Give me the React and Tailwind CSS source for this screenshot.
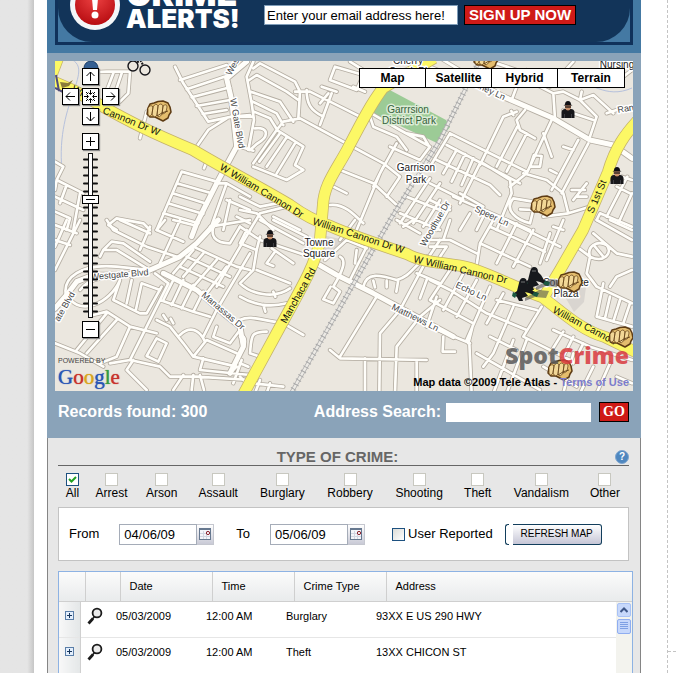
import React, { useState } from 'react';

// Side streets, grouped in map tiles. Paths use three units per map pixel.
const tiles = [
  {
    at: 'translate(50 50) scale(0.3333)',
    streets: [
      'M375 50 L400 100 L475 215 L545 200 L600 195',
      'M390 90 L530 45 M410 118 L530 78 M425 142 L540 112 M440 168 L540 150 M458 192 L530 180',
      'M440 290 L475 240 L530 205',
      'M320 540 L395 365 L500 395 M380 400 L485 430 M368 430 L472 462 M354 460 L460 492 M340 490 L445 520',
      'M500 400 L530 400 L480 540 M530 400 L600 440 M530 450 L600 480 M540 450 L520 540 M560 500 L600 520',
      'M290 185 L270 265 M470 335 L462 355',
      'M170 65 L240 65 L235 130 L210 155 M190 70 L165 135 M215 70 L190 145 M110 68 L170 65',
      'M15 335 L40 350 L20 390 L100 430 M20 390 L15 420 M15 440 L100 480 M50 405 L30 460 M15 485 L60 505 L50 540 M90 430 L70 540',
      'M175 525 L200 505 L280 520 L300 540',
      'M175 525 L200 540',
    ],
    avenues: ['M590 35 L530 85 L545 150 L560 290 L500 400 L440 520 L425 560'],
  },
  {
    at: 'translate(50 220) scale(0.3333)',
    streets: [
      'M15 15 L80 40 M15 60 L60 75 M90 0 L15 150 M50 0 L15 80',
      'M170 0 L190 30 L290 80 L380 110 M210 0 L300 40 M270 90 L300 20 M320 30 L400 65 M345 0 L320 30 M390 0 L330 130 M370 0 L430 15',
      'M150 110 L160 90 L185 65 L220 70 L300 125 M160 90 L200 90 L290 145',
      'M50 235 C30 170 100 130 200 140 L300 150 M55 230 C90 290 180 250 210 180 M90 210 C120 170 180 170 210 170',
      'M210 180 L190 240 L270 280 L290 280 L335 200 M230 250 L245 180 M258 268 L275 190 L330 210',
      'M315 160 L355 190 L280 340 L240 420',
      'M340 240 L370 180 M365 255 L400 180 M395 265 L430 195 M330 240 L430 275 L480 290 M430 275 L460 215',
      'M430 80 L560 140 L600 150 M410 110 L540 170 M390 140 L520 200 M430 90 L370 160 M460 100 L400 170 M500 120 L430 200 M530 140 L470 220',
      'M500 0 C470 50 500 70 540 70 L570 20 M480 20 L600 0 M600 30 L500 200 M600 100 L500 270 L460 350',
      'M130 285 L170 275 L240 320 L320 340 M170 280 L80 390 M200 300 L110 400 M240 320 L200 410 L150 430 M280 340 L240 420 L180 430',
      'M320 300 L360 320 L400 370 L430 410 L560 440 L540 460 M430 410 L470 360 L560 400 M390 345 C420 315 450 330 465 365 M500 320 L490 350 L540 370 L570 330',
      'M15 370 L90 400 L160 440 M240 420 L330 440 L360 470 L440 470 L600 480',
      'M320 355 L350 370 L325 425 L290 408 Z M250 420 L230 450 L290 510 M370 510 L400 465 M425 510 L430 465 M450 465 L462 510',
      'M460 415 L450 450 L600 465 M575 420 L550 490',
      'M350 300 l-10 -15 M370 310 l-8 -14',
    ],
    avenues: ['M505 0 L440 70 L390 110 L300 150 L230 165 L130 165 L80 185 L50 225 L15 265', 'M340 160 L440 210 L520 280 L570 320 L580 380 L540 460'],
  },
  {
    at: 'translate(240 50) scale(0.3333)',
    streets: [
      'M40 35 L20 80 L35 160 L42 210 L25 300 M0 200 L40 200',
      'M40 55 L60 40 L165 95 L180 125 L175 205 M28 90 L50 75 L140 125 L175 150 M32 125 L120 155 L160 215 M38 155 L110 190 L130 225 M42 185 L90 205 L112 240',
      'M165 125 L210 125 L300 170 L380 210',
      'M40 340 L110 240 L130 215 L180 205 L300 270 L430 340 L480 380 L440 440',
      'M110 240 L190 290 L165 345 L190 360 L140 390 L40 350 M165 280 L110 370 M140 262 L80 350 M120 250 L58 335',
      'M45 235 C85 230 90 260 50 282 L30 300 M0 290 L40 302',
      'M200 120 C200 160 210 180 250 200 M275 130 L240 225 M245 110 L290 125 M265 130 L240 160',
      'M270 90 L285 50 L370 75 L350 120 Z M330 35 L370 60 M375 125 L340 110',
      'M385 185 L480 240 L570 290 L540 330 L450 290 M390 200 L400 230 L470 260 L500 300 M500 250 L550 260 L565 285 M470 280 L420 370 L350 540',
      'M300 360 L400 400 L470 465 M430 350 L400 410 M280 410 L320 430 M270 465 C310 460 340 490 370 520',
      'M500 440 L600 480 M480 520 L570 385 M520 520 L600 400 M550 530 L600 450 M480 490 L600 540',
      'M0 440 L60 470 L110 460 M0 480 L50 490 L100 540 M30 540 L60 490 L140 470 M100 500 L180 540',
    ],
    avenues: [],
  },
  {
    at: 'translate(240 220) scale(0.3333)',
    streets: [
      'M0 20 L60 60 L210 110 M60 0 L190 70 M100 0 L200 50 M0 70 L50 90 L40 150 L0 190 M95 85 L160 130 M105 95 L80 130 l20 8 M50 150 L150 190',
      'M60 50 L50 90 M20 30 L0 70 M0 190 C30 220 100 240 150 205 M0 230 C50 260 100 260 140 250 M70 255 l6 20 M100 215 l6 15',
      'M0 300 C30 285 60 300 130 310 L190 345 M80 335 C30 335 35 350 30 400 L60 410 M0 350 C20 340 20 380 0 400',
      'M255 120 L320 60 L380 85 M300 110 C320 120 310 150 280 200 L300 215 L280 250 L250 238 L272 200 M345 0 L300 60 M330 180 L390 60 M350 90 L345 130',
      'M370 200 C380 155 420 165 470 180 C510 170 520 140 560 110 M400 182 l5 20 M440 182 l0 20 M475 180 l-6 35',
      'M410 230 L300 410 M270 390 L300 415 L560 420 M375 415 L375 520 M418 520 L420 340 L480 270 L560 120 L600 60 M465 520 L470 380 L540 290 L600 240 M530 520 L530 420',
      'M470 0 L540 40 M520 0 L490 20 M530 160 L600 190 M560 180 L540 235 M590 230 L560 320',
      'M40 490 L130 500 M60 480 L45 520 M90 490 L80 520 M0 470 L30 500 M0 430 L25 440',
    ],
    avenues: ['M230 130 L290 165 L400 220 L520 285 L640 350'],
  },
  {
    at: 'translate(430 50) scale(0.3333)',
    streets: [
      'M0 50 L60 75 M40 30 L90 60 M200 40 L260 60 M245 150 L260 110 L290 60',
      'M290 75 L330 110 L370 130 L375 205 M360 110 L430 35 M370 130 L400 125 L450 150 L500 200 L480 260 M400 180 L490 210 M450 150 L490 135 L550 190 M450 150 L455 125',
      'M285 180 L260 210 L270 240 L315 265 M365 210 L290 370 L240 410 M260 185 L220 200 L150 345 M262 230 L200 350 M290 250 L230 365 M250 195 l-6 -12',
      'M60 250 L290 365 M50 285 L270 400 M60 250 L0 350 M80 300 L40 370 M105 312 L65 395 M130 325 L95 405 M150 340 L90 460 M20 330 L180 405 L210 435',
      'M340 250 L365 320 M300 350 L312 315 L335 318 L330 350 Z',
      'M445 270 L365 420 M475 280 L395 430 M400 290 L430 300 M360 360 L380 370',
      'M280 370 L350 390 L400 430 L415 490 L340 500 M415 490 L480 470 M470 400 L430 450 M440 440 L470 440 M425 420 L465 420',
      'M160 340 L240 390 L245 430 L200 540 M90 430 L160 470 M70 440 L300 540',
      'M340 460 L250 445 C220 480 260 510 300 520 L310 480 L270 478',
      'M592 380 L530 500 M606 430 L565 520 M575 380 L606 390 M500 510 L510 490 L606 530 M560 410 L600 430',
      'M580 80 L606 60 M530 190 L560 180 M0 400 L100 450 M0 450 L60 480 M60 470 L20 540 M120 490 L90 540 M160 500 L140 540',
    ],
    avenues: ['M90 70 L220 140 L370 205 L480 270 L550 285 L606 325'],
  },
  {
    at: 'translate(430 220) scale(0.3333)',
    streets: [
      'M0 60 L60 60 L140 100 M0 80 L50 80 L30 110 M60 0 L40 60 M140 135 L150 70 L190 0 M150 70 L300 140 M180 20 L345 95 M230 0 L390 80 M260 10 L200 130 M310 30 L250 140 M360 40 L330 130 M400 0 L350 120 M400 30 L370 20',
      'M0 180 L60 210 L170 280 M0 240 L130 310 L115 370 M60 150 L0 240 M100 160 L40 270 M140 180 L80 290 M180 200 L110 360 M220 220 L170 310 M0 320 L120 370 M40 350 L38 395 L75 395 M118 370 L125 520',
      'M335 260 L280 350 L420 420 M170 280 L290 330 M200 240 L320 270 M250 260 L190 400 L160 440 M180 350 L260 390 M140 400 L330 510 M250 360 L190 520 M290 360 L230 520',
      'M370 330 L480 380 L606 420 M400 335 L360 400 M430 350 L390 430 M460 370 L430 430',
      'M500 0 L606 60 M490 40 L560 100 L606 110 M440 80 L480 110 L470 160 L500 200 L606 250 M540 0 L606 30 M520 190 L500 290 L606 320 M540 230 L525 295 M570 240 L550 305 M600 250 L580 310 M606 150 L560 170 L540 200',
      'M480 110 C470 80 500 60 530 75 C550 100 520 130 480 110 M495 80 L520 110',
      'M430 400 L400 520 M490 440 L450 520 M540 430 L500 520 M340 440 L440 500 M560 470 L606 490',
    ],
    avenues: [],
  },
];

const mainRoads = [
  'M50 80 L75 91 L100 105 C130 122 150 132 193 150 C230 172 262 188 290 205 C305 216 318 222 330 226 C350 235 380 245 407 254 C425 264 450 262 470 268 C500 278 520 290 542 297 C560 310 580 330 605 337 L640 354',
  'M434 58 L383 88 C370 105 360 125 347 150 C335 172 324 185 323 205 L320 240 C316 262 306 280 280 327 L243 395',
  'M640 118 C625 134 615 148 608 172 L583 230 L560 270 L545 295',
  'M58 58 L52 74',
];

const roadLabels = [
  { x: 71, y: 91, r: 28, t: 'Wil' },
  { x: 102, y: 113, r: 22, t: 'Cannon Dr W' },
  { x: 219, y: 169, r: 31, t: 'W William Cannon Dr' },
  { x: 312, y: 224, r: 18, t: 'William Cannon Dr W' },
  { x: 413, y: 262, r: 13, t: 'W William Cannon Dr' },
  { x: 552, y: 312, r: 28, t: 'William Cannon' },
  { x: 286, y: 324, r: -61, t: 'Manchaca Rd' },
  { x: 593, y: 214, r: -67, t: 'S 1st St' },
];

const streetLabels = [
  { x: 231, y: 76, r: -62, t: 'Wes' },
  { x: 230, y: 99, r: 80, t: 'W Gate Blvd' },
  { x: 91, y: 280, r: -5, t: 'Westgate Blvd' },
  { x: 59, y: 322, r: -60, t: 'ate Blvd' },
  { x: 201, y: 296, r: 40, t: 'Manassas Dr' },
  { x: 391, y: 309, r: 26, t: 'Matthews Ln' },
  { x: 425, y: 247, r: -60, t: 'Woodhue Dr' },
  { x: 474, y: 211, r: 25, t: 'Speer Ln' },
  { x: 455, y: 287, r: 25, t: 'Echo Ln' },
  { x: 475, y: 87, r: 25, t: 'finey Ln' },
  { x: 618, y: 113, r: -10, t: 'Ran' },
];

const placeLabels = [
  { x: 416, y: 171, t: 'Garrison' },
  { x: 416, y: 183, t: 'Park' },
  { x: 319, y: 246, t: 'Towne' },
  { x: 319, y: 257, t: 'Square' },
  { x: 566, y: 286, t: 'Southgate' },
  { x: 566, y: 297, t: 'Plaza' },
  { x: 408, y: 64, t: 'Cherry' },
  { x: 408, y: 75, t: 'Creek Pl' },
  { x: 617, y: 68, t: 'Nursing' },
];

const crimeTypes = ['All', 'Arrest', 'Arson', 'Assault', 'Burglary', 'Robbery', 'Shooting', 'Theft', 'Vandalism', 'Other'];

const records = [
  { date: '05/03/2009', time: '12:00 AM', type: 'Burglary', address: '93XX E US 290 HWY' },
  { date: '05/03/2009', time: '12:00 AM', type: 'Theft', address: '13XX CHICON ST' },
];

const Fist = ({ x, y }) => (
  <g transform={`translate(${x} ${y})`} stroke="#5e3c14" strokeWidth="0.9" strokeLinejoin="round">
    <path d="M-11 -3 L-9 -7 L-5 -8 L-1 -9.5 L4 -10 L9 -8 L11 -4 L12 1 L10 4 L9 7 L4 10 L0 8 L-4 6 L-9 6 L-12 3 Z" fill="#e4bd6e" strokeWidth="1.5" />
    <path d="M-11 -3 Q-8 -7 -6 -4 L-7 3 Q-10 7 -11 3 Z M-6 -4 Q-3 -9 -1 -5 L-2 4 Q-5 8 -7 3 Z M-1 -5 Q2 -9 4 -5 L3 3 Q0 8 -2 4 Z M4 -5 Q8 -8 8 -4 L7 1 Q5 3 3 3 Z" fill="#f2d796" strokeWidth="0.7" />
    <path d="M-2 5 Q3 1 9 0" fill="none" />
  </g>
);

const Burglar = ({ x, y }) => (
  <g transform={`translate(${x} ${y})`}>
    <path d="M-6.5 8 V2 Q-6 -1 -3 -1 H3 Q6 -1 6.5 2 V8 Z" fill="#17171a" />
    <path d="M-3 -5 H3 V-2 Q2 0.5 0 0.5 Q-2 0.5 -3 -2 Z" fill="#c98f6a" />
    <path d="M-4.5 -4.5 L-3 -5.5 Q-3 -9 0 -9 Q3 -9 3 -5.5 L4.5 -4.5 Z" fill="#101014" />
    <path d="M-3 -3 H3" stroke="#101014" strokeWidth="1.2" />
    <path d="M-3.5 4 V8 M3.5 4 V8" stroke="#4d4d55" strokeWidth="0.7" />
  </g>
);

const Robber = ({ x, y }) => (
  <g transform={`translate(${x} ${y})`}>
    <path d="M0 9 L14 1 L24 2 L21 9 L10 8 L0 12 Z" fill="#555" opacity="0.6" />
    <path d="M-6 -6 Q-5 -11 -2 -11 Q2 -11 2 -6 L5 -3 L8 2 L13 4 L11 7 L4 4 L0 3 L3 7 L-3 9 L-2 12 L-6 12 L-8 8 L-12 5 L-8 2 Z" fill="#17191d" />
    <path d="M9 3 l5 1 l-2 4 l-5 -2 Z M-12 3 l4 2 l-2 4 l-3 -2 Z" fill="#1c5a42" />
    <path d="M-4 -7 H0" stroke="#8a8a8a" strokeWidth="0.8" />
  </g>
);

const CrimeMap = () => (
  <svg className="block w-full h-[330px] bg-[#e9e5dc] font-['Liberation_Sans',Arial,sans-serif]" viewBox="55 61 578 330" preserveAspectRatio="xMidYMid slice" role="img" aria-label="Crime map">
    <rect x="-400" y="0" width="1600" height="500" fill="#ebe7df" />
    <path d="M386 88 L446 120 L450 127 L437 143 L370 112 Z" fill="#9ccb96" />
    <path d="M562 292 L586 287 L584 302 L574 312 Z M322 235 L345 240 L325 257 Z" fill="#d9d5d0" />
    <path d="M573 82 C590 80 605 100 632 88 M68 58 C98 68 55 100 62 170" fill="none" stroke="#b6c1dc" />

    <g fill="none" strokeLinecap="round" strokeLinejoin="round">
      {tiles.map((tile) => (
        <g key={tile.at} transform={tile.at} stroke="#b4ada2">
          <path d={tile.streets.join(' ')} strokeWidth="13" />
          <path d={tile.avenues.join(' ')} strokeWidth="20" />
        </g>
      ))}
      {tiles.map((tile) => (
        <g key={tile.at} transform={tile.at} stroke="#fffefa">
          <path d={tile.streets.join(' ')} strokeWidth="8" />
          <path d={tile.avenues.join(' ')} strokeWidth="15" />
        </g>
      ))}
    </g>

    {/* railway */}
    <g fill="none">
      <path d="M481 58 L440 140 L390 220 L290 395" stroke="#b2b2b2" strokeWidth="4" />
      <path d="M481 58 L440 140 L390 220 L290 395" stroke="#eceae5" strokeWidth="2.4" />
      <path d="M481 58 L440 140 L390 220 L290 395" stroke="#a8a8a8" strokeWidth="6" strokeDasharray="1 4" />
    </g>

    <g fill="none" strokeLinejoin="round">
      <path d={mainRoads.join(' ')} stroke="#c4b26a" strokeWidth="12" />
      <path d={mainRoads.join(' ')} stroke="#fcf865" strokeWidth="10.5" />
    </g>
    <path d="M56 75 L59 91 M55 88 L63 92" fill="none" stroke="#514d7a" strokeWidth="2" />
    <path d="M60 82 L68 83 L73 80 L69 86 L62 88 Z" fill="#8a7c3a" />

    <g fontSize="10" fill="#111">
      {roadLabels.map((l) => (
        <text key={l.x} transform={`translate(${l.x} ${l.y}) rotate(${l.r})`}>{l.t}</text>
      ))}
    </g>
    <g fontSize="9" fill="#444" stroke="#fff" strokeWidth="3" paintOrder="stroke" strokeLinejoin="round">
      {streetLabels.map((l) => (
        <text key={l.t} transform={`translate(${l.x} ${l.y}) rotate(${l.r})`}>{l.t}</text>
      ))}
    </g>
    <g fontSize="10" fill="#222" stroke="#fff" strokeWidth="3" paintOrder="stroke" strokeLinejoin="round" textAnchor="middle">
      {placeLabels.map((l) => (
        <text key={l.t} x={l.x} y={l.y}>{l.t}</text>
      ))}
      <g fill="#35613a" stroke="#dcecd6">
        <text x="408" y="113">Garrrsion</text>
        <text x="409" y="124">District Park</text>
      </g>
    </g>

    {/* handcuffs */}
    <g fill="none" stroke="#15151a" strokeWidth="1.4">
      <circle cx="133" cy="66" r="5" />
      <circle cx="145" cy="70" r="5" />
      <path d="M137 62 L141 61 L143 65" strokeWidth="2" strokeDasharray="2 1" />
    </g>
    <circle cx="91" cy="68" r="7" fill="#345f92" stroke="#1c3d66" />

    <Burglar x={270} y={239} />
    <Burglar x={568} y={110} />
    <Burglar x={617} y={176} />
    <Robber x={536} y={278} />
    <Robber x={525} y={289} />
    <Fist x={159} y={111} />
    <Fist x={486} y={59} />
    <Fist x={543} y={206} />
    <Fist x={570} y={282} />
    <Fist x={621} y={337} />
    <Fist x={560} y={370} />
  </svg>
);

const mapButton = 'flex items-center justify-center w-[17px] h-[17px] bg-white border border-black shadow-[1px_1px_1px_#888]';

const Glyph = ({ d }) => (
  <svg className="w-[15px] h-[15px] shrink-0" viewBox="0 0 15 15" fill="none" stroke="#000" aria-hidden="true">
    <path d={d} />
  </svg>
);

const MapControls = () => (
  <div className="absolute left-[7px] top-[7px] w-[57px] flex flex-col items-center">
    <div className="grid grid-cols-3 gap-[3px]">
      <button className={`${mapButton} col-start-2`} aria-label="Pan up"><Glyph d="M7.5 12 V3 M3.5 7 L7.5 3 L11.5 7" /></button>
      <button className={`${mapButton} col-start-1`} aria-label="Pan left"><Glyph d="M12 7.5 H3 M7 3.5 L3 7.5 L7 11.5" /></button>
      <button className={mapButton} aria-label="Recenter"><Glyph d="M7.5 1 V5 M5.5 3.5 L7.5 5.5 L9.5 3.5 M7.5 14 V10 M5.5 11.5 L7.5 9.5 L9.5 11.5 M1 7.5 H5 M3.5 5.5 L5.5 7.5 L3.5 9.5 M14 7.5 H10 M11.5 5.5 L9.5 7.5 L11.5 9.5 M3 3 L5 5 M12 3 L10 5 M3 12 L5 10 M12 12 L10 10" /></button>
      <button className={mapButton} aria-label="Pan right"><Glyph d="M3 7.5 H12 M8 3.5 L12 7.5 L8 11.5" /></button>
      <button className={`${mapButton} col-start-2`} aria-label="Pan down"><Glyph d="M7.5 3 V12 M3.5 8 L7.5 12 L11.5 8" /></button>
    </div>
    <button className={`${mapButton} mt-2`} aria-label="Zoom in"><Glyph d="M3 7.5 H12 M7.5 3 V12" /></button>
    <div className="relative w-[17px] h-[171px]">
      <svg className="block w-[17px] h-[171px]" viewBox="0 0 17 171" aria-hidden="true">
        {Array.from({ length: 20 }, (_, i) => (
          <path key={i} d={`M2 ${9.5 + i * 8} h13`} stroke="#111" strokeWidth="2" strokeLinecap="round" />
        ))}
        <rect x="6.5" y="3.5" width="4" height="164" fill="#fff" stroke="#111" />
        <rect x="0.5" y="45.5" width="16" height="8" fill="#fff" stroke="#000" />
        <path d="M4 49.5 h9" stroke="#000" />
      </svg>
      <input type="range" min="0" max="19" defaultValue="14" aria-label="Zoom level" className="absolute inset-0 w-full h-full opacity-0" />
    </div>
    <button className={mapButton} aria-label="Zoom out"><Glyph d="M3 7.5 H12" /></button>
  </div>
);

const DateField = ({ id, label, value }) => (
  <div className="flex items-center">
    <label htmlFor={id} className="text-[13px]">{label}</label>
    <input id={id} type="text" defaultValue={value} className="ml-5 w-[78px] h-[21px] px-1 text-[13px] bg-white border border-[#a5acb8] outline-none" />
    <button type="button" aria-label={`Pick ${label} date`} className="flex items-center justify-center w-[17px] h-[21px] border-y border-r border-[#c5c7cf] bg-linear-to-b from-white to-[#c9cad6]">
      <svg className="w-[13px] h-[13px]" viewBox="0 0 13 13" aria-hidden="true">
        <rect x="0.5" y="0.5" width="11" height="11" fill="#f4f5fa" stroke="#66788f" />
        <path d="M1 1.5 H11" stroke="#66788f" />
        <path d="M4.5 3 V11 M7.5 3 V11 M1 5.5 H11 M1 8.5 H11" stroke="#d2d6e2" />
        <circle cx="9" cy="5" r="1.6" fill="#fff" stroke="#8a1f2b" />
      </svg>
    </button>
  </div>
);

const App = () => {
  const [selected, setSelected] = useState(['All']);

  const toggle = (type) => {
    setSelected(selected.includes(type) ? selected.filter((s) => s !== type) : [...selected, type]);
  };

  return (
    <div className="flex h-screen overflow-hidden bg-white font-['Liberation_Sans',Arial,sans-serif] text-black">
      <div className="w-[34px] shrink-0 bg-linear-to-r from-[#e5e5e5] from-80% to-[#c6c6c6]" />
      <div className="w-[13px] shrink-0" />

      <main className="flex-1 min-w-0 flex flex-col">
        <header className="bg-[#4479a3] px-2 pb-2">
          <div className="border-x-[3px] border-b-[3px] border-[#10315a]">
            <div className="flex items-start h-[42px] overflow-hidden rounded-b-[34px] bg-[#123459]">
              <svg className="ml-3 w-[50px] h-[32px] shrink-0" viewBox="0 18 50 32" aria-hidden="true">
                <defs>
                  <radialGradient id="alert" cx="50%" cy="30%" r="70%">
                    <stop offset="0" stopColor="#ef4444" />
                    <stop offset="1" stopColor="#b80d12" />
                  </radialGradient>
                </defs>
                <circle cx="25" cy="23" r="25" fill="#f4f6f8" />
                <circle cx="25" cy="23" r="20" fill="url(#alert)" />
                <path d="M21 5 H29 L27 28 H23 Z" fill="#fff" />
                <circle cx="25" cy="33" r="3.5" fill="#fff" />
              </svg>
              <div className="ml-[6px] w-[116px] h-[42px] shrink-0 flex flex-col justify-end pb-3 font-[Inter,sans-serif] font-black text-white">
                <span className="text-[34px] leading-7">CRIME</span>
                <span className="text-[26px] leading-[22px]">ALERTS!</span>
              </div>
              <form className="ml-[22px] mt-[5px] flex gap-[6px]" onSubmit={(e) => e.preventDefault()}>
                <input type="text" aria-label="Email address" defaultValue="Enter your email address here!" className="w-[194px] h-5 px-[2px] bg-white border border-[#7f9db9] text-[13px] outline-none" />
                <button type="submit" className="w-[112px] h-5 bg-[#cf1a17] border border-black text-[15px] leading-4 font-bold text-white whitespace-nowrap">SIGN UP NOW</button>
              </form>
            </div>
          </div>
        </header>

        <section className="bg-[#8aa3b9] px-2 pt-2 pb-4 shrink-0">
          <div className="relative overflow-hidden">
            <CrimeMap />
            <MapControls />
            <div className="absolute right-2 top-[7px] flex border border-black">
              {['Map', 'Satellite', 'Hybrid', 'Terrain'].map((view) => (
                <button key={view} className="w-[66px] h-[18px] bg-white border-r border-black last:border-r-0 text-[12px] leading-4 font-bold">{view}</button>
              ))}
            </div>
            <div className="absolute left-[3px] bottom-[2px] flex flex-col">
              <span className="text-[7px] leading-2 text-[#444]">POWERED BY</span>
              <span className="font-['Liberation_Serif',serif] text-[21px] leading-6 [text-shadow:0_0_1px_currentColor]">
                <span className="text-[#2a56b5]">G</span>
                <span className="text-[#c8322d]">o</span>
                <span className="text-[#d9a520]">o</span>
                <span className="text-[#2a56b5]">g</span>
                <span className="text-[#3a9a3f]">l</span>
                <span className="text-[#c8322d]">e</span>
              </span>
            </div>
            <div className="absolute right-1 bottom-[2px] flex flex-col items-end whitespace-nowrap">
              <span className="mb-1 font-['Open_Sans',sans-serif] text-[23px] leading-8 font-extrabold opacity-85">
                <span className="text-[#5a5a5a]">Spot</span>
                <span className="text-[#d93a3f]">Crime</span>
              </span>
              <span className="text-[11px] leading-[14px] font-bold">
                Map data ©2009 Tele Atlas - <a href="#terms" className="text-[#7b7bcc]">Terms of Use</a>
              </span>
            </div>
          </div>

          <div className="mt-[11px] flex items-center justify-between pl-[3px] pr-1 text-white">
            <span className="text-[16px] leading-5 font-bold">Records found: 300</span>
            <form className="flex items-center" onSubmit={(e) => e.preventDefault()}>
              <label htmlFor="address" className="text-[16px] leading-5 font-bold">Address Search:</label>
              <input id="address" type="text" className="ml-[5px] w-[145px] h-[19px] bg-white text-[13px] text-black outline-none" />
              <button type="submit" className="ml-2 w-[30px] h-5 bg-[#cf1a17] border border-black font-['Liberation_Serif',serif] text-[14px] leading-4 font-bold text-white">GO</button>
            </form>
          </div>
        </section>

        <section className="flex-1 flex flex-col border-x border-[#858585] bg-[#e7e7e7] pl-[10px] pr-[7px]">
          <div className="relative mr-1 mt-[10px] pr-3 border-b border-[#666] text-center">
            <h2 className="text-[15px] leading-[17px] font-bold text-[#666]">TYPE OF CRIME:</h2>
            <button type="button" aria-label="Help" className="absolute right-0 top-[2px] w-[14px] h-[14px] rounded-full border border-[#7fa6d0] bg-[#4f87bf] text-[10px] leading-3 font-bold text-white">?</button>
          </div>

          <div className="mt-[7px] mr-1 grid grid-cols-[29fr_49fr_51fr_62fr_66fr_69fr_69fr_48fr_79fr_48fr]">
            {crimeTypes.map((type) => (
              <label key={type} className="flex flex-col items-center text-[12px] leading-[14px]">
                <span className="relative w-[13px] h-[13px]">
                  <input
                    type="checkbox"
                    checked={selected.includes(type)}
                    onChange={() => toggle(type)}
                    className="block appearance-none w-[13px] h-[13px] bg-white border border-[#c8c8c0] checked:border-[#1d5180]"
                  />
                  {selected.includes(type) && (
                    <svg className="absolute inset-0 pointer-events-none" viewBox="0 0 13 13" fill="none" stroke="#21a121" strokeWidth="2" aria-hidden="true">
                      <path d="M3 6 L5.5 8.5 L10 4" />
                    </svg>
                  )}
                </span>
                {type}
              </label>
            ))}
          </div>

          <form className="mt-[7px] mr-1 h-[54px] shrink-0 flex items-center border border-[#c3c3c3] bg-white pl-[10px]" onSubmit={(e) => e.preventDefault()}>
            <DateField id="from" label="From" value="04/06/09" />
            <div className="ml-[22px]">
              <DateField id="to" label="To" value="05/06/09" />
            </div>
            <label className="ml-[27px] flex items-center gap-[3px] text-[13px] whitespace-nowrap">
              <input type="checkbox" className="appearance-none w-[13px] h-[13px] border border-[#1d5180] bg-linear-to-br from-[#dcdcd7] to-white" />
              User Reported
            </label>
            <span className="ml-3 w-1 h-[21px] rounded-l-[3px] border-l border-y border-[#123e5c]" />
            <button type="submit" className="ml-1 w-[89px] h-[21px] rounded-r-[3px] border-y border-r border-[#123e5c] bg-linear-to-b from-white to-[#c6c6d6] text-[10px] leading-4 whitespace-nowrap">REFRESH MAP</button>
          </form>

          <div className="mt-[10px] flex-1 border-x border-t border-[#8db2e3] bg-white text-[11px]">
            <table className="w-full table-fixed border-collapse bg-linear-to-b from-[#fbfbfb] to-[#e9ebec]" aria-label="Record columns">
              <thead>
                <tr className="h-[29px] border-b border-[#cfcfcf]">
                  <th className="w-[26px] border-r border-[#cfcfcf]" aria-label="Expand" />
                  <th className="w-[35px] border-r border-[#cfcfcf]" aria-label="Locate" />
                  <th className="w-[92px] border-r border-[#cfcfcf] pl-[9px] text-left font-normal">Date</th>
                  <th className="w-[82px] border-r border-[#cfcfcf] pl-[9px] text-left font-normal">Time</th>
                  <th className="w-[92px] border-r border-[#cfcfcf] pl-[9px] text-left font-normal">Crime Type</th>
                  <th className="pl-[9px] text-left font-normal">Address</th>
                </tr>
              </thead>
            </table>
            <div className="flex">
              <table className="flex-1 table-fixed border-collapse" aria-label="Records">
                <tbody>
                  {records.map((record) => (
                    <tr key={record.address} className="h-9 border-b border-[#e6e6e6] align-top">
                      <td className="w-[21px] border-r border-[#d0d0d0] bg-linear-to-r from-[#f8f8f8] to-[#e4e7e8] pt-[9px]">
                        <button type="button" aria-label="Expand record" className="block mx-auto w-[9px] h-[9px]">
                          <svg viewBox="0 0 9 9" className="w-[9px] h-[9px]" aria-hidden="true">
                            <rect x="0.5" y="0.5" width="8" height="8" fill="#e3eefc" stroke="#5a7ea8" />
                            <path d="M2 4.5 H7 M4.5 2 V7" stroke="#16365c" />
                          </svg>
                        </button>
                      </td>
                      <td className="w-9 pt-[5px] pl-[6px]">
                        <svg className="w-[16px] h-[19px]" viewBox="0 0 16 19" fill="none" stroke="#1b1b1b" aria-hidden="true">
                          <circle cx="10" cy="6" r="4.4" fill="#ececec" strokeWidth="1.8" />
                          <path d="M7.5 9.5 L5.5 12" strokeWidth="1.6" />
                          <path d="M6 11.5 L1.5 16.5" strokeWidth="2.8" />
                        </svg>
                      </td>
                      <td className="w-[90px] pt-[6px]">{record.date}</td>
                      <td className="w-20 pt-[6px]">{record.time}</td>
                      <td className="w-[90px] pt-[6px]">{record.type}</td>
                      <td className="pt-[6px]">{record.address}</td>
                    </tr>
                  ))}
                </tbody>
              </table>
              <div className="w-4 shrink-0 flex flex-col items-center gap-[2px] bg-[#f3f3ee] pt-[1px]">
                <button type="button" aria-label="Scroll up" className="flex items-center justify-center w-[14px] h-[14px] rounded-[2px] border border-[#a9c2f5] bg-[#c7d8fb]">
                  <svg className="w-2 h-2" viewBox="0 0 8 8" fill="none" stroke="#3f5788" strokeWidth="2" aria-hidden="true">
                    <path d="M0.5 6 L4 2.5 L7.5 6" />
                  </svg>
                </button>
                <div className="flex items-center justify-center w-[14px] h-[15px] rounded-[2px] border border-[#8fadf0] bg-[#c7d8fb]">
                  <svg className="w-2 h-2" viewBox="0 0 8 8" stroke="#7ea0e4" aria-hidden="true">
                    <path d="M0 0.5 H8 M0 2.5 H8 M0 4.5 H8 M0 6.5 H8" />
                  </svg>
                </div>
              </div>
            </div>
          </div>
        </section>
      </main>

      <div className="w-[26px] shrink-0" />
      <div className="w-[9px] shrink-0 border-l border-dashed border-[#c4c4c4] flex flex-col">
        <div className="h-[652px] shrink-0 border-b border-dashed border-[#c4c4c4]" />
      </div>
    </div>
  );
};

export default App;
